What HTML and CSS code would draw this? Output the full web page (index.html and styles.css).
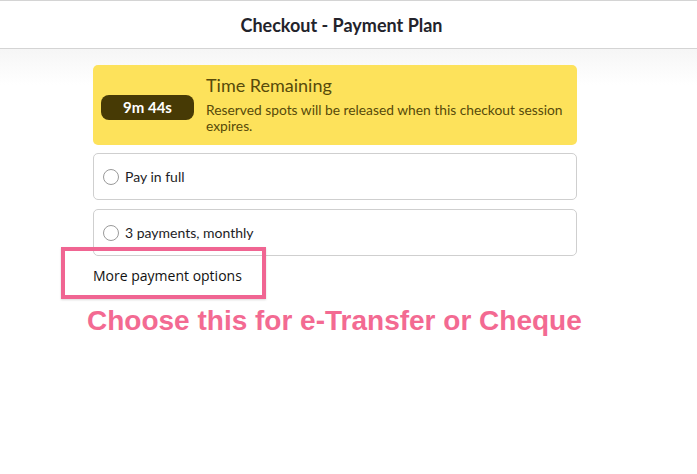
FILE: index.html
```html
<!DOCTYPE html>
<html lang="en">

<head>
    <meta charset="UTF-8">
    <meta name="viewport" content="width=device-width, initial-scale=1.0">
    <title>Checkout - Payment Plan</title>
    <link rel="stylesheet" href="styles.css">
</head>

<body>
    <div class="header">
        <h2>Checkout - Payment Plan</h2>
    </div>

    <div class="content">
        <div class="checkout">
            <div class="timer-box">
                <span class="timer-badge">9m 44s</span>
                <div class="timer-text">
                    <h3>Time Remaining</h3>
                    <p>Reserved spots will be released when this checkout session expires.</p>
                </div>
            </div>

            <label class="plan-option">
                <span class="radio"></span>
                Pay in full
            </label>

            <label class="plan-option">
                <span class="radio"></span>
                3 payments, monthly
            </label>

            <div class="more-options">More payment options</div>

            <p class="note">Choose this for e-Transfer or Cheque</p>
        </div>

        <!-- annotation box drawn over the link -->
        <div class="highlight"></div>
    </div>
</body>

</html>
```

FILE: styles.css
```css
body {
    margin: 0;
    font-family: 'Lato', sans-serif;
    background-color: #ffffff;
}

.header {
    height: 47px;
    padding-right: 14px;
    border-top: 1px solid #d4d4d4;
    border-bottom: 1px solid #d4d4d4;
    display: flex;
    align-items: center;
    justify-content: center;
}

.header h2 {
    margin: 0;
    font-size: 18px;
    font-weight: 700;
    color: #23232b;
}

.content {
    position: relative;
    min-height: 425px;
    background: linear-gradient(#f6f6f6, #ffffff 36px);
    padding-top: 16px;
}

.checkout {
    width: 484px;
    margin-left: 93px;
}

.timer-box {
    display: flex;
    align-items: center;
    height: 80px;
    box-sizing: border-box;
    padding: 0 10px 0 8px;
    background-color: #fde25b;
    border-radius: 5px;
}

.timer-badge {
    flex: none;
    width: 93px;
    height: 25px;
    margin-top: 5px;
    line-height: 25px;
    text-align: center;
    background-color: #473a05;
    color: #ffffff;
    font-size: 15px;
    font-weight: 700;
    border-radius: 8px;
}

.timer-text {
    margin-left: 12px;
    margin-top: -3px;
}

.timer-text h3 {
    margin: 0 0 6px;
    font-size: 18px;
    font-weight: 400;
    color: #574a0a;
}

.timer-text p {
    margin: 0;
    font-size: 13.8px;
    line-height: 16px;
    color: #574a0a;
}

.plan-option {
    display: flex;
    align-items: center;
    height: 47px;
    box-sizing: border-box;
    margin-top: 8px;
    padding-left: 9px;
    border: 1px solid #cfcfcf;
    border-radius: 5px;
    font-size: 14px;
    color: #1d1d26;
}

.plan-option + .plan-option {
    margin-top: 9px;
}

.radio {
    width: 14px;
    height: 14px;
    margin-right: 6px;
    border: 1px solid #9a9a9a;
    border-radius: 50%;
    background-color: #ffffff;
}

.more-options {
    margin-top: 10px;
    font-family: 'Open Sans', sans-serif;
    font-size: 14px;
    color: #111111;
}

.note {
    margin: 20px 0 0 -6px;
    white-space: nowrap;
    font-family: 'Liberation Sans', Arial, sans-serif;
    font-size: 28px;
    font-weight: 700;
    color: #f36a92;
}

.highlight {
    position: absolute;
    left: 61px;
    top: 198px;
    width: 197px;
    height: 44px;
    border: 4px solid #f06592;
    box-shadow: 0 1px 2px rgba(0, 0, 0, 0.15);
}
```
